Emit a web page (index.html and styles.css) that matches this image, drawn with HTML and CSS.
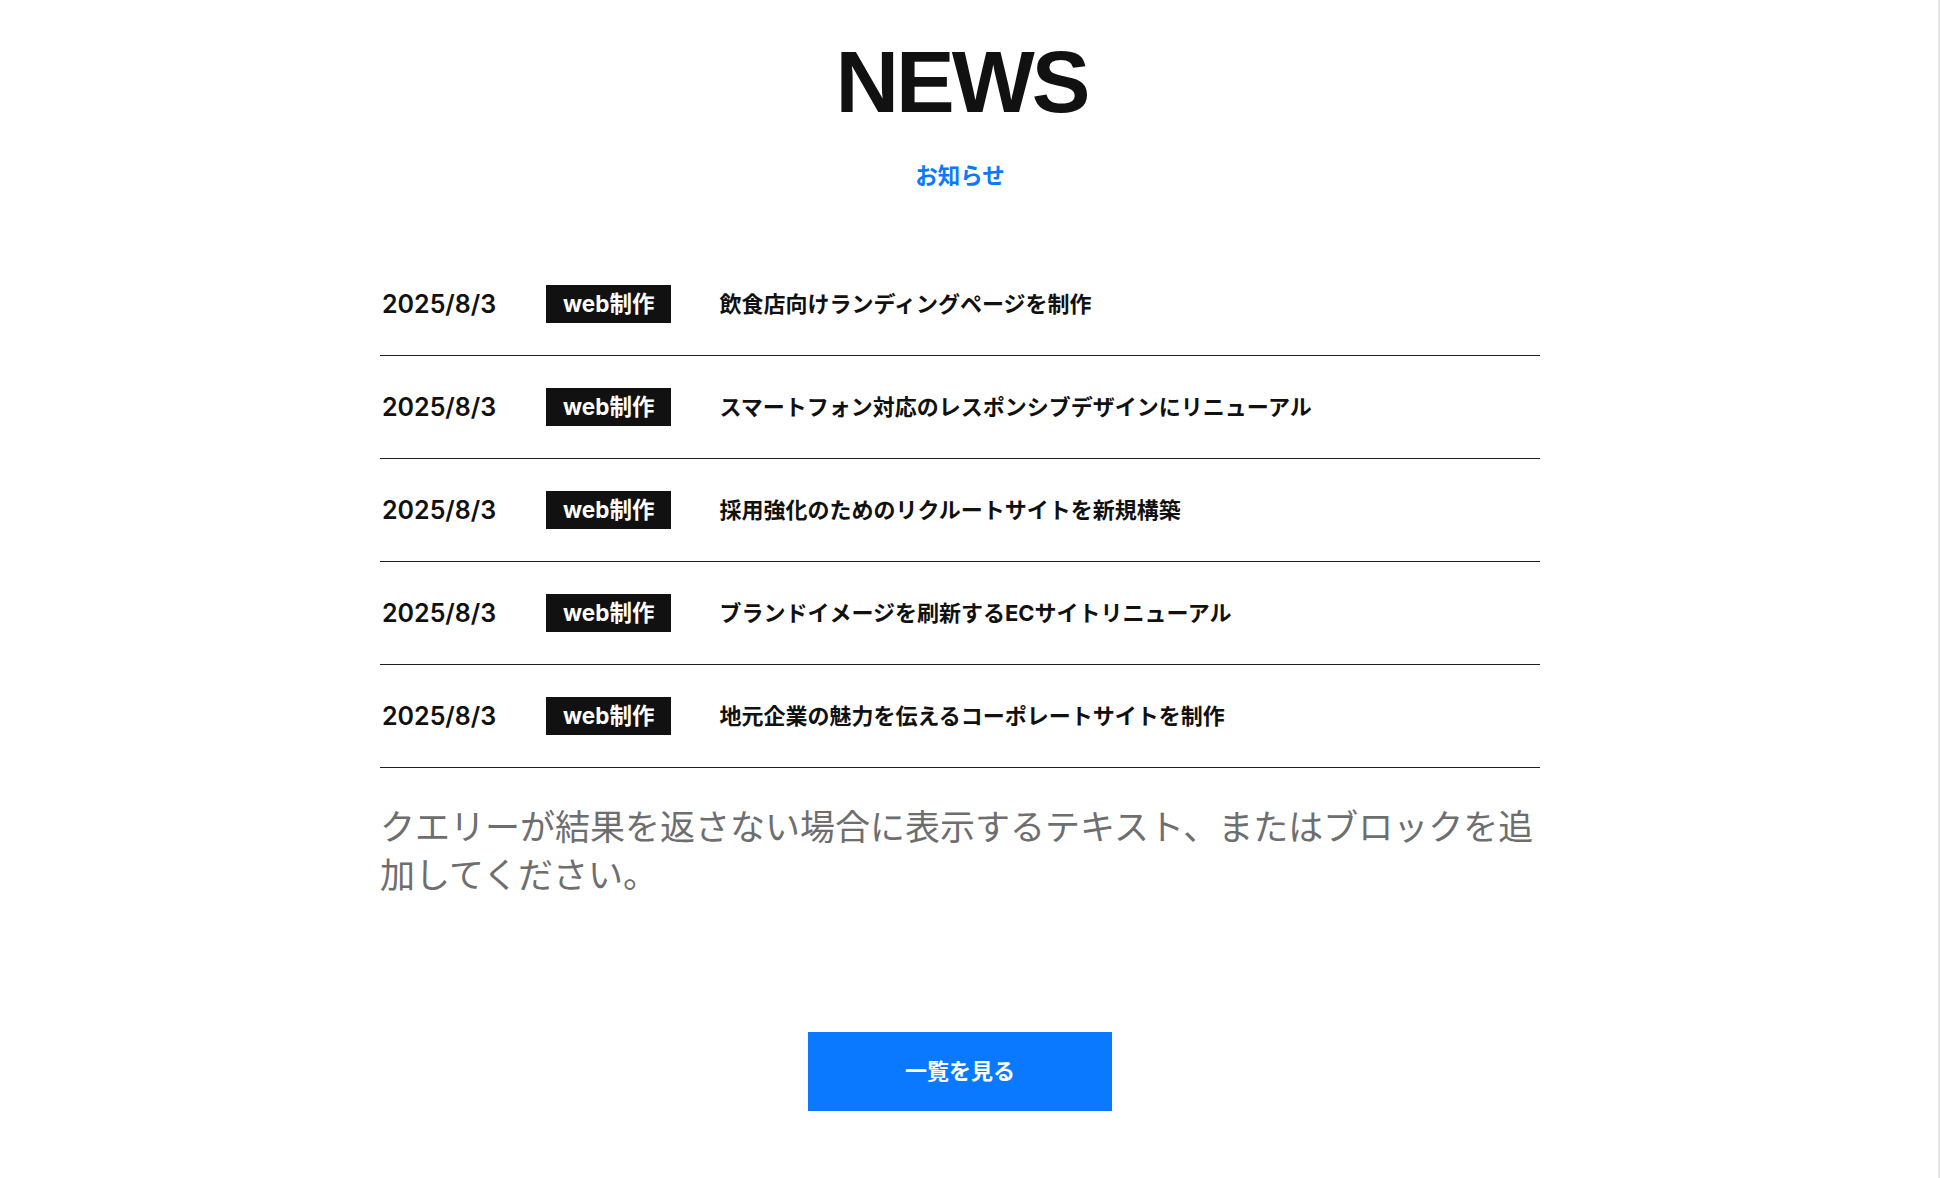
FILE: index.html
```html
<!DOCTYPE html>
<html lang="ja">
<head>
<meta charset="utf-8">
<title>NEWS</title>
<link rel="stylesheet" href="styles.css">
</head>
<body>
<div class="page">
  <section class="news">
    <header class="news-head">
      <h1 class="news-title">NEWS</h1>
      <p class="news-sub">お知らせ</p>
    </header>
    <ul class="news-list">
      <li class="news-item">
        <span class="news-date">2025/8/3</span>
        <span class="news-tag">web制作</span>
        <a class="news-link" href="#">飲食店向けランディングページを制作</a>
      </li>
      <li class="news-item">
        <span class="news-date">2025/8/3</span>
        <span class="news-tag">web制作</span>
        <a class="news-link" href="#">スマートフォン対応のレスポンシブデザインにリニューアル</a>
      </li>
      <li class="news-item">
        <span class="news-date">2025/8/3</span>
        <span class="news-tag">web制作</span>
        <a class="news-link" href="#">採用強化のためのリクルートサイトを新規構築</a>
      </li>
      <li class="news-item">
        <span class="news-date">2025/8/3</span>
        <span class="news-tag">web制作</span>
        <a class="news-link" href="#">ブランドイメージを刷新するECサイトリニューアル</a>
      </li>
      <li class="news-item">
        <span class="news-date">2025/8/3</span>
        <span class="news-tag">web制作</span>
        <a class="news-link" href="#">地元企業の魅力を伝えるコーポレートサイトを制作</a>
      </li>
    </ul>
    <p class="news-empty">クエリーが結果を返さない場合に表示するテキスト、またはブロックを追加してください。</p>
    <a class="news-more" href="#">一覧を見る</a>
  </section>
</div>
<div class="scroll-edge"></div>
</body>
</html>
```

FILE: styles.css
```css
html, body {
  margin: 0;
  padding: 0;
  background: #ffffff;
}

body {
  font-family: Inter, "Noto Sans CJK JP", sans-serif;
  color: #111111;
}

.page {
  margin-right: 20px;
}

.news {
  width: 1160px;
  margin: 0 auto;
  padding-top: 38px;
  padding-bottom: 66px;
}

.news-head {
  text-align: center;
}

.news-title {
  margin: 0;
  font-family: "Liberation Sans", Arial, sans-serif;
  font-weight: 700;
  font-size: 88px;
  line-height: 1;
  letter-spacing: -3px;
  padding-left: 3px;
  color: #111111;
}

.news-sub {
  margin: 37px 0 0;
  font-family: "Noto Sans CJK JP", sans-serif;
  font-size: 22.5px;
  line-height: 22px;
  font-weight: 700;
  color: #0a79ff;
}

.news-list {
  list-style: none;
  margin: 68px 0 0;
  padding: 0;
}

.news-item {
  display: flex;
  align-items: center;
  padding: 32px 0;
  border-bottom: 1px solid #1e1e1e;
}

.news-date {
  width: 164px;
  padding-left: 2px;
  flex-shrink: 0;
  font-size: 25px;
  line-height: 38px;
  font-weight: 600;
  color: #111111;
}

.news-tag {
  flex-shrink: 0;
  height: 38px;
  padding: 0 17px;
  margin-right: 48px;
  background: #111111;
  color: #ffffff;
  font-size: 22.5px;
  line-height: 38px;
  font-weight: 700;
}

.news-link {
  font-size: 22px;
  line-height: 38px;
  font-weight: 700;
  color: #111111;
  text-decoration: none;
}

.news-empty {
  margin: 33px 0 0;
  font-family: "Noto Sans CJK JP", sans-serif;
  font-size: 35px;
  line-height: 48px;
  font-weight: 400;
  color: #6e6e6e;
}

.news-more {
  display: flex;
  align-items: center;
  justify-content: center;
  box-sizing: border-box;
  width: 304px;
  height: 79px;
  padding-bottom: 5px;
  margin: 135px auto 0;
  background: #0a79ff;
  color: #ffffff;
  font-family: "Noto Sans CJK JP", sans-serif;
  font-size: 22px;
  font-weight: 700;
  text-decoration: none;
}

.scroll-edge {
  position: fixed;
  top: 0;
  right: 0;
  bottom: 0;
  width: 18px;
  background: #ffffff;
  border-right: 2px solid #e6e6e6;
}
```
